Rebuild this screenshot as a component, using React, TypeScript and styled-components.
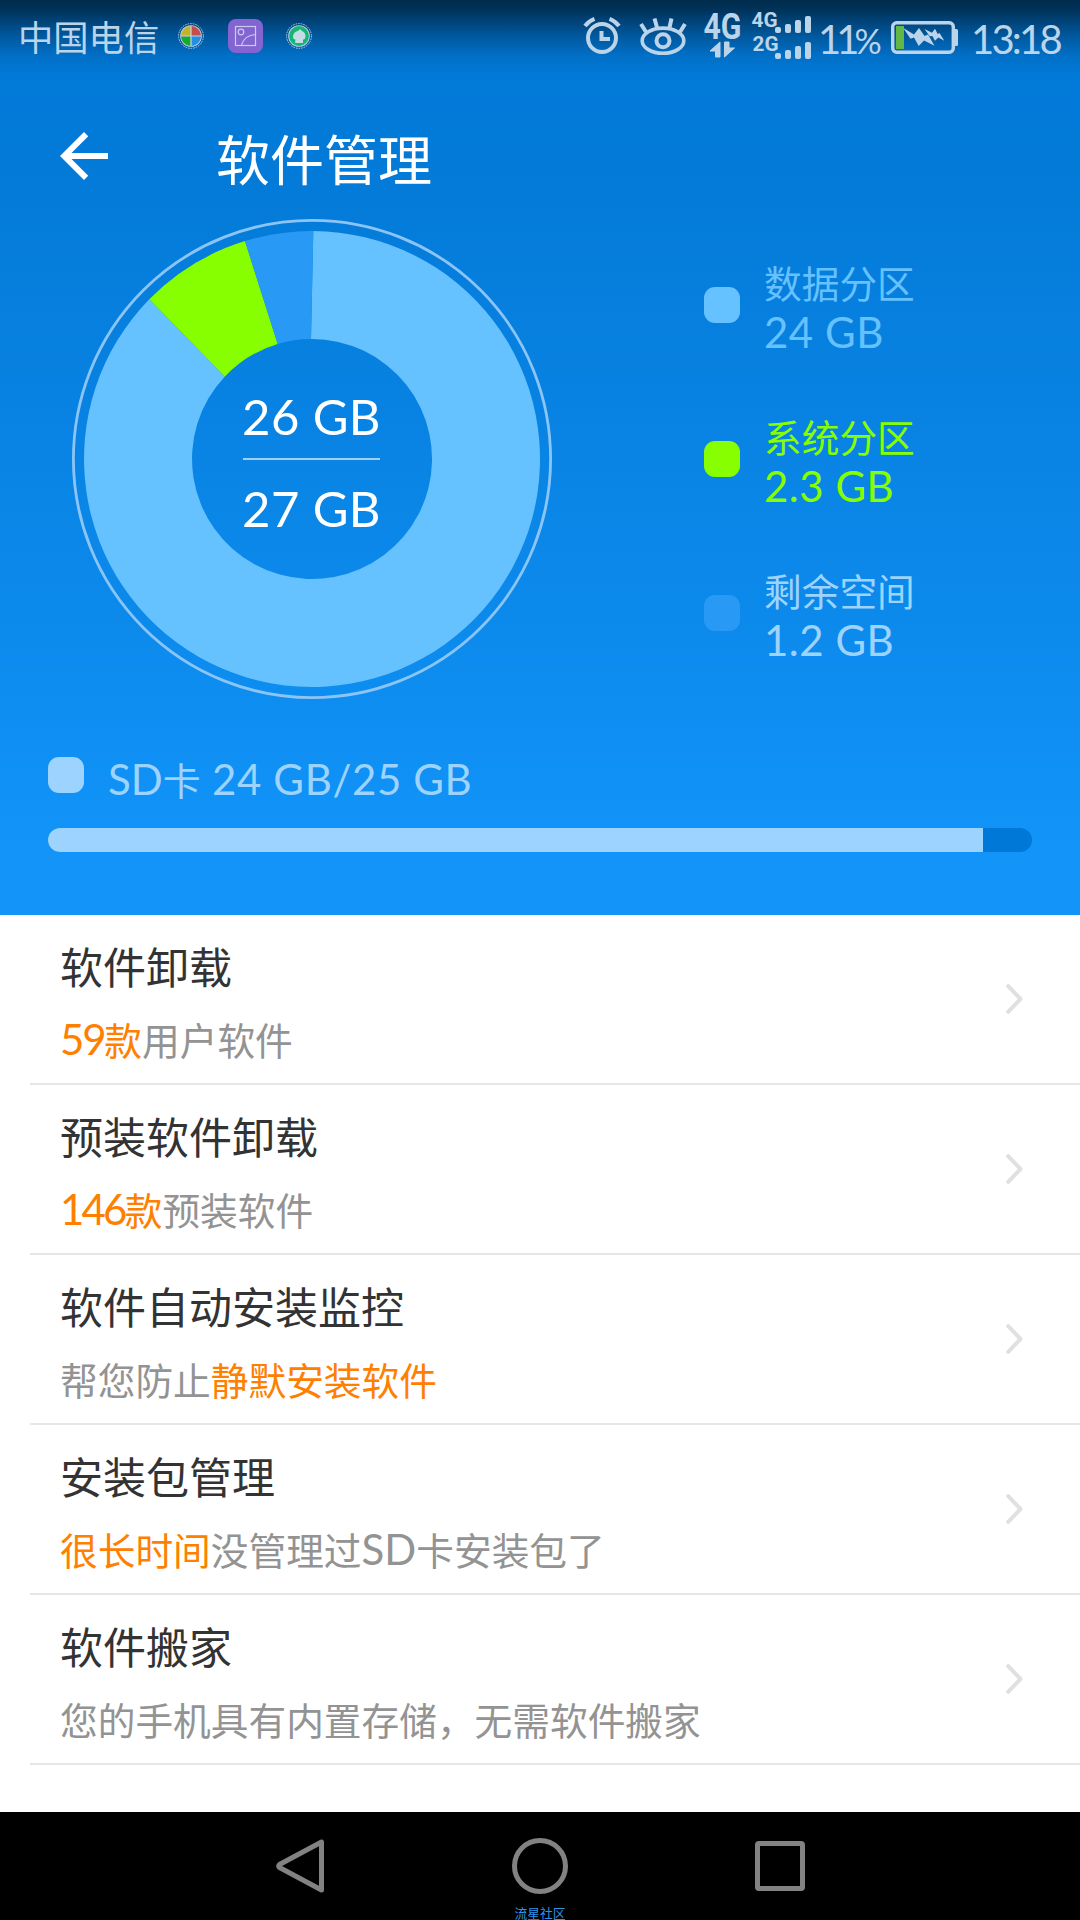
import React from "react";
import styled, { createGlobalStyle } from "styled-components";

const cjk = `"Noto Sans CJK SC", sans-serif`;
const latin = `Lato, "Noto Sans CJK SC", sans-serif`;

const GlobalStyle = createGlobalStyle`
  * { box-sizing: border-box; }
  body { margin: 0; background: #fff; font-family: ${cjk}; }
  svg { display: block; flex: none; overflow: visible; }
`;

const Screen = styled.div`
  width: 1080px;
  height: 1920px;
  display: flex;
  flex-direction: column;
  overflow: hidden;
  background: #fff;
`;

const Header = styled.header`
  height: 915px;
  flex: none;
  display: flex;
  flex-direction: column;
  background: linear-gradient(#0078d7 0, #047bd9 200px, #0c8aec 620px, #1294f9 860px);
`;

const StatusBar = styled.div`
  height: 76px;
  flex: none;
  display: flex;
  align-items: flex-start;
  justify-content: space-between;
  background: linear-gradient(rgba(0, 0, 0, 0.64) 0, rgba(0, 0, 0, 0.6) 8px, rgba(0, 0, 0, 0.27) 36px, rgba(0, 0, 0, 0.08) 56px, transparent 74px);
  color: #bcd4ea;
`;

const StatusGroup = styled.div`
  height: 76px;
  display: flex;
  align-items: flex-start;
`;

const Carrier = styled.div`
  width: 151px;
  padding-left: 18px;
  margin-right: 27px;
  font-size: 35.3px;
  line-height: 72px;
  white-space: nowrap;
`;

const StatusText = styled.div<{ $width: number; $spacing: number; $inset?: number }>`
  width: ${(p) => p.$width}px;
  padding-left: ${(p) => p.$inset ?? 0}px;
  font: 400 40px/78px ${latin};
  letter-spacing: ${(p) => p.$spacing}px;
  white-space: nowrap;
`;

const Percent = styled.span`
  font-size: 34px;
`;

const TitleBar = styled.div`
  height: 136px;
  flex: none;
  display: flex;
  align-items: center;
  padding: 24px 0 0 60px;
`;

const PageTitle = styled.h1`
  margin: 3px 0 0 108px;
  font: 400 54px/64px ${cjk};
  color: #fff;
`;

const Storage = styled.section`
  height: 494px;
  flex: none;
  display: flex;
  padding: 7px 0 0 72px;
`;

const ChartBox = styled.div`
  width: 480px;
  height: 480px;
  display: grid;
  place-items: center;
  > * { grid-area: 1 / 1; }
`;

const Totals = styled.div`
  width: 137px;
  margin-right: 1px;
  display: flex;
  flex-direction: column;
  align-items: center;
  color: #fff;
  font: 400 49px/83px ${latin};
  letter-spacing: 0.4px;
  white-space: nowrap;
`;

const Total = styled.span`
  padding-top: 7px;
`;

const TotalsRule = styled.div`
  width: 137px;
  height: 2px;
  background: #9fd0f8;
`;

const Legend = styled.div`
  margin: 36px 0 0 152px;
  display: flex;
  flex-direction: column;
  gap: 54px;
`;

const LegendItem = styled.div<{ $color: string }>`
  height: 100px;
  display: flex;
  align-items: center;
  gap: 24px;
  color: ${(p) => p.$color};
`;

const Swatch = styled.div<{ $color: string }>`
  width: 36px;
  height: 36px;
  flex: none;
  border-radius: 11px;
  background: ${(p) => p.$color};
`;

const LegendText = styled.div`
  display: flex;
  flex-direction: column;
  padding-top: 4px;
  font-size: 37.7px;
  line-height: 50px;
  white-space: nowrap;
`;

const Latin = styled.span<{ $spacing?: number }>`
  font-family: ${latin};
  font-size: 42px;
  letter-spacing: ${(p) => p.$spacing ?? 0}px;
`;

const SdRow = styled.div`
  height: 60px;
  display: flex;
  align-items: center;
  gap: 24px;
  margin-top: 39px;
  padding-left: 48px;
  color: #9dd3ff;
  font-size: 38px;
  white-space: nowrap;
`;

const SdLabel = styled.div`
  line-height: 60px;
  padding-top: 8px;
`;

const Track = styled.div`
  height: 24px;
  margin: 23px 48px 0;
  border-radius: 12px;
  background: #0078d7;
  overflow: hidden;
`;

const TrackFill = styled.div`
  width: 935px;
  height: 24px;
  background: #9dd3ff;
`;

const List = styled.main`
  flex: 1;
  padding-left: 30px;
`;

const Row = styled.div`
  height: 170px;
  display: flex;
  align-items: center;
  justify-content: space-between;
  padding: 0 57px 0 30px;
  border-bottom: 2px solid #e6e6e6;
`;

const RowText = styled.div`
  display: flex;
  flex-direction: column;
  gap: 20px;
  padding-top: 5px;
  white-space: nowrap;
`;

const RowTitle = styled.div`
  color: #333;
  font-size: 43px;
  line-height: 54px;
`;

const RowNote = styled.div`
  color: #939393;
  font-size: 37.7px;
  line-height: 54px;
`;

const Accent = styled.span`
  color: #ff8000;
`;

const NavBar = styled.nav`
  height: 108px;
  flex: none;
  background: #000;
  display: grid;
  grid-template-columns: 420px 240px 420px;
`;

const NavCell = styled.div<{ $left: number; $top: number }>`
  padding: ${(p) => p.$top}px 0 0 ${(p) => p.$left}px;
`;

const Watermark = styled.div`
  margin-top: 12px;
  text-align: center;
  color: #3193e6;
  font-size: 12.8px;
  line-height: 14px;
`;

const AppIcons = () => (
  <svg width="140" height="76" viewBox="178 0 140 76">
    <g fill="none" stroke="#b4cbe0">
      <circle cx="191" cy="36" r="12.4" strokeWidth="1" strokeDasharray="1.6 1" />
      <circle cx="299" cy="36" r="12.4" strokeWidth="1" strokeDasharray="1.6 1" />
    </g>
    <circle cx="191" cy="36" r="10.8" fill="#c2d2e2" />
    <path d="M190.4 35.4V26a10 10 0 0 0-9.4 9.4z" fill="#c4b32a" />
    <path d="M191.6 35.4V26a10 10 0 0 1 9.4 9.4z" fill="#c24f4c" />
    <path d="M190.4 36.4V46a10 10 0 0 1-9.4-9.6z" fill="#18aa30" />
    <path d="M191.6 36.4V46a10 10 0 0 0 9.4-9.6z" fill="#218fe4" />
    <rect x="228" y="19" width="35" height="34" rx="8" fill="#8464d0" />
    <g fill="none" stroke="#c9cbee" strokeWidth="1.2">
      <rect x="235.5" y="26.5" width="20" height="19" />
      <circle cx="241" cy="32" r="2.8" />
      <path d="M241.5 45c1.500-5 6-10 14-10.500" />
    </g>
    <circle cx="299" cy="36" r="10.8" fill="#c2d2e2" />
    <circle cx="299" cy="36" r="9.9" fill="#15b574" />
    <path d="M295 43h8v-3.500q2.500.5 2.500-4-.5-3.500-3.500-4.500l-2-2-2 2q-4 .5-5 5 0 4 2.500 3.500z" fill="#c5dbe6" />
  </svg>
);

const SystemIcons = () => (
  <svg width="234" height="76" viewBox="582 0 234 76">
    <g fill="none" stroke="currentColor" strokeWidth="4">
      <circle cx="602" cy="38" r="14" />
      <path d="M601.500 31v8H610" />
      <path d="M585 26q3.500-5 9.500-7.200M619 26q-3.500-5-9.500-7.200" />
      <ellipse cx="663" cy="40.700" rx="20.800" ry="12.600" strokeWidth="3.600" />
      <circle cx="663" cy="40.700" r="6.500" />
      <path d="M641 24l5 8M654.500 18.500l2.500 9M671.500 18.500l-2 9M685 24l-5 8" />
    </g>
    <g fill="currentColor" fontFamily="Roboto, sans-serif" fontWeight="700">
      <text x="703.500" y="38.500" fontSize="36" textLength="38" lengthAdjust="spacingAndGlyphs">4G</text>
      <text x="751.500" y="27" fontSize="20.500" textLength="26" lengthAdjust="spacingAndGlyphs">4G</text>
      <text x="752.500" y="51" fontSize="20.500" textLength="26" lengthAdjust="spacingAndGlyphs">2G</text>
    </g>
    <path d="M720 42v15h-4.500v-6H710zM724.500 57V42h4.500v6h5.500z" fill="currentColor" stroke="currentColor" strokeWidth="1" />
    <g fill="currentColor">
      {[[775, 27, 6], [785, 24, 9], [795, 20, 13], [805, 16, 17]].map(([x, y, h]) => (
        <React.Fragment key={x}>
          <rect x={x} y={y} width="6" height={h} rx="2" />
          <rect x={x} y={y + 26} width="6" height={h} rx="2" />
        </React.Fragment>
      ))}
    </g>
  </svg>
);

const Battery = () => (
  <svg width="68" height="76" viewBox="891 0 68 76">
    <rect x="892.700" y="22.700" width="60.600" height="29.600" rx="4" fill="none" stroke="currentColor" strokeWidth="3.400" />
    <path d="M955 29h1.500q1.500 0 1.500 1.500v14q0 1.500-1.500 1.500H955z" fill="currentColor" />
    <rect x="896" y="26" width="8" height="23" fill="#61b846" />
    <path d="M903.300 28L914 34.500 919 28 924.500 36 928 34.500 934.500 45.700 924 40.500 918.700 46 914 37.500 910.500 38.800zM924.500 29L932 32.700 935 28.700 937.700 34 939.500 33 944.300 40.700 938.300 37.500 935 40.700 932.300 36 929.700 36.300z" fill="currentColor" />
  </svg>
);

const BackArrow = () => (
  <svg width="48" height="48" viewBox="4 4 16 16">
    <path d="M20 11H7.830l5.590-5.590L12 4l-8 8 8 8 1.410-1.410L7.830 13H20z" fill="#fff" />
  </svg>
);

const Donut = () => (
  <svg width="480" height="480" viewBox="-240 -240 480 480">
    <circle r="238.600" fill="none" stroke="#8bc5f6" strokeWidth="2.800" />
    <path d="M1.300-228A228 228 0 1 1-162.700-159.700L-87.300-82.300A120 120 0 1 0-1-120z" fill="#66c1ff" />
    <path d="M-162.700-159.700A228 228 0 0 1-67-217.900L-34.300-115A120 120 0 0 0-87.300-82.300z" fill="#88ff00" />
    <path d="M-67-217.900A228 228 0 0 1 1.300-228L-1-120A120 120 0 0 0-34.300-115z" fill="#289af6" />
  </svg>
);

const Chevron = () => (
  <svg width="17" height="30" viewBox="0 0 17 30">
    <path d="M2.200 2.200L14.500 15 2.200 27.800" fill="none" stroke="#e0e0e0" strokeWidth="4" strokeLinecap="round" strokeLinejoin="round" />
  </svg>
);

const legend = [
  { name: "数据分区", size: "24 GB", color: "#66c1ff", swatch: "#66c1ff" },
  { name: "系统分区", size: "2.3 GB", color: "#88ff00", swatch: "#88ff00" },
  { name: "剩余空间", size: "1.2 GB", color: "#9dd3ff", swatch: "#289af6" },
];

const rows: { title: string; note: React.ReactNode }[] = [
  { title: "软件卸载", note: <><Accent><Latin $spacing={-2.2}>59</Latin>款</Accent>用户软件</> },
  { title: "预装软件卸载", note: <><Accent><Latin $spacing={-2.8}>146</Latin>款</Accent>预装软件</> },
  { title: "软件自动安装监控", note: <>帮您防止<Accent>静默安装软件</Accent></> },
  { title: "安装包管理", note: <><Accent>很长时间</Accent>没管理过<Latin>SD</Latin>卡安装包了</> },
  { title: "软件搬家", note: <>您的手机具有内置存储，无需软件搬家</> },
];

export default function App() {
  return (
    <Screen>
      <GlobalStyle />
      <Header>
        <StatusBar>
          <StatusGroup>
            <Carrier>中国电信</Carrier>
            <AppIcons />
          </StatusGroup>
          <StatusGroup>
            <SystemIcons />
            <StatusText $width={75} $spacing={-5} $inset={2}>11<Percent>%</Percent></StatusText>
            <Battery />
            <StatusText as="time" $width={121} $spacing={-2.8} $inset={12}>13:18</StatusText>
          </StatusGroup>
        </StatusBar>
        <TitleBar>
          <BackArrow />
          <PageTitle>软件管理</PageTitle>
        </TitleBar>
        <Storage>
          <ChartBox>
            <Donut />
            <Totals>
              <Total>26 GB</Total>
              <TotalsRule />
              <Total>27 GB</Total>
            </Totals>
          </ChartBox>
          <Legend>
            {legend.map((item) => (
              <LegendItem key={item.name} $color={item.color}>
                <Swatch $color={item.swatch} />
                <LegendText>
                  <span>{item.name}</span>
                  <Latin $spacing={0.5}>{item.size}</Latin>
                </LegendText>
              </LegendItem>
            ))}
          </Legend>
        </Storage>
        <SdRow>
          <Swatch $color="#9dd3ff" />
          <SdLabel><Latin>SD</Latin>卡<Latin $spacing={0.6}> 24 GB/25 GB</Latin></SdLabel>
        </SdRow>
        <Track><TrackFill /></Track>
      </Header>
      <List>
        {rows.map((row) => (
          <Row key={row.title}>
            <RowText>
              <RowTitle>{row.title}</RowTitle>
              <RowNote>{row.note}</RowNote>
            </RowText>
            <Chevron />
          </Row>
        ))}
      </List>
      <NavBar>
        <NavCell $left={276} $top={27}>
          <svg width="48" height="54" viewBox="0 0 48 54">
            <path d="M45.500 3v48L3.500 28.500q-1.500-1.500 0-3z" fill="none" stroke="#828282" strokeWidth="5" strokeLinejoin="round" />
          </svg>
        </NavCell>
        <NavCell $left={0} $top={26}>
          <svg width="240" height="56" viewBox="0 0 240 56">
            <circle cx="120" cy="28" r="25.500" fill="none" stroke="#828282" strokeWidth="5" />
          </svg>
          <Watermark>流星社区</Watermark>
        </NavCell>
        <NavCell $left={95} $top={29}>
          <svg width="50" height="50" viewBox="0 0 50 50">
            <rect x="2.500" y="2.500" width="45" height="45" rx="1.500" fill="none" stroke="#828282" strokeWidth="5" />
          </svg>
        </NavCell>
      </NavBar>
    </Screen>
  );
}
